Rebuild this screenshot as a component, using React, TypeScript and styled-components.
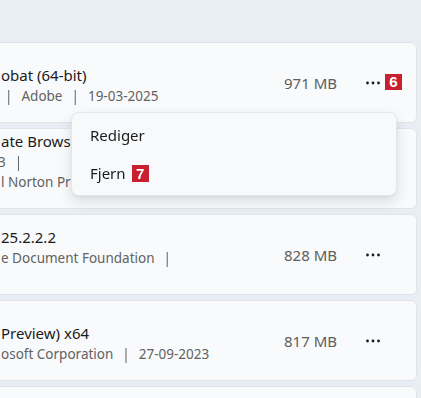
import React from 'react';
import styled, { createGlobalStyle } from 'styled-components';

interface AppRow {
  id: string;
  title: string;
  lines: React.ReactNode[];
  size: string;
  badge?: string;
}

const GlobalStyle = createGlobalStyle`
  html, body {
    margin: 0;
    padding: 0;
    background: #e9eef5;
  }
  body {
    font-family: "Noto Sans", "Open Sans", sans-serif;
    -webkit-font-smoothing: antialiased;
  }
`;

const Page = styled.div`
  position: relative;
  width: 421px;
  height: 398px;
  overflow: hidden;
  padding-top: 42px;
  box-sizing: border-box;
`;

const List = styled.div`
  display: flex;
  flex-direction: column;
  gap: 5px;
  margin-left: -24px;
  margin-right: 4px;
`;

const Card = styled.div`
  display: flex;
  align-items: center;
  height: 81px;
  box-sizing: border-box;
  padding: 0 27px 0 24px;
  background: #f9fafb;
  border: 1px solid #e1e5ea;
  border-radius: 6px;
`;

const Info = styled.div`
  flex: 1;
  min-width: 0;
  display: flex;
  flex-direction: column;
  padding-top: 4px;
  white-space: nowrap;
`;

const Title = styled.div`
  font-size: 15px;
  line-height: 22px;
  color: #1b1b1b;
`;

const Meta = styled.div`
  font-size: 13.5px;
  line-height: 20px;
  color: #626262;
`;

const Separator = styled.span<{ $lead?: boolean }>`
  display: inline-block;
  margin: 0 9px 0 ${(p) => (p.$lead ? '4px' : '9px')};
  color: #666666;
  transform: translateZ(0);
`;

const Clipped = styled.span`
  margin-left: -3px;
`;

const Size = styled.div`
  font-size: 15px;
  color: #5e5e5e;
  white-space: nowrap;
`;

const MoreButton = styled.div`
  position: relative;
  display: flex;
  align-items: center;
  justify-content: center;
  width: 32px;
  height: 32px;
  margin-left: 20px;
  flex-shrink: 0;
`;

const CornerBadge = styled.span`
  position: absolute;
  left: 28px;
  top: 7px;
  display: flex;
  align-items: center;
  justify-content: center;
  width: 17px;
  height: 16px;
  background: #c8202e;
  color: #ffffff;
  font-family: "Liberation Sans", Arial, sans-serif;
  font-weight: 700;
  font-size: 15px;
`;

const Menu = styled.div`
  position: absolute;
  left: 71px;
  top: 112px;
  width: 326px;
  box-sizing: border-box;
  padding: 3px 0;
  background: #f7f9fb;
  border: 1px solid rgba(0, 0, 0, 0.07);
  border-radius: 8px;
  box-shadow: 0 6px 14px rgba(0, 0, 0, 0.12), 0 1px 3px rgba(0, 0, 0, 0.06);
`;

const MenuItem = styled.div`
  display: flex;
  align-items: center;
  height: 38px;
  padding-left: 18px;
  font-size: 15px;
  color: #1b1b1b;
`;

const InlineBadge = styled.span`
  display: inline-flex;
  align-items: center;
  justify-content: center;
  width: 17px;
  height: 17px;
  margin-left: 6px;
  background: #c8202e;
  color: #ffffff;
  font-family: "Liberation Sans", Arial, sans-serif;
  font-weight: 700;
  font-size: 15px;
`;

const Sep: React.FC<{ lead?: boolean }> = ({ lead }) => <Separator $lead={lead}>|</Separator>;

const getRows = (): AppRow[] => [
  {
    id: 'acrobat',
    title: 'obat (64-bit)',
    lines: [
      <>
        <Sep lead />
        Adobe
        <Sep />
        19-03-2025
      </>,
    ],
    size: '971 MB',
    badge: '6',
  },
  {
    // covered by the open menu from x=71 on
    id: 'norton',
    title: 'ate Brows',
    lines: [
      <>
        <Clipped>3</Clipped>
        <Sep />
      </>,
      <>l Norton Pri</>,
      <>&nbsp;</>,
    ],
    size: '',
  },
  {
    id: 'libre',
    title: '25.2.2.2',
    lines: [
      <>
        e Document Foundation
        <Sep />
      </>,
      <>&nbsp;</>,
    ],
    size: '828 MB',
  },
  {
    id: 'teams',
    title: 'Preview) x64',
    lines: [
      <>
        osoft Corporation
        <Sep />
        27-09-2023
      </>,
    ],
    size: '817 MB',
  },
  {
    id: 'next',
    title: '',
    lines: [],
    size: '',
  },
];

const DotsIcon: React.FC = () => (
  <svg width="16" height="4" viewBox="0 0 16 4" aria-hidden="true">
    <circle cx="2.5" cy="2" r="1.4" fill="#1b1b1b" />
    <circle cx="8" cy="2" r="1.4" fill="#1b1b1b" />
    <circle cx="13.5" cy="2" r="1.4" fill="#1b1b1b" />
  </svg>
);

const App: React.FC = () => {
  const rows = getRows();

  return (
    <>
      <GlobalStyle />
      <Page>
        <List>
          {rows.map((row) => (
            <Card key={row.id}>
              <Info>
                <Title>{row.title}</Title>
                {row.lines.map((line, i) => (
                  <Meta key={i}>{line}</Meta>
                ))}
              </Info>
              <Size>{row.size}</Size>
              <MoreButton aria-label="Flere indstillinger">
                {row.size && <DotsIcon />}
                {row.badge && <CornerBadge>{row.badge}</CornerBadge>}
              </MoreButton>
            </Card>
          ))}
        </List>

        <Menu>
          <MenuItem>Rediger</MenuItem>
          <MenuItem>
            Fjern
            <InlineBadge>7</InlineBadge>
          </MenuItem>
        </Menu>
      </Page>
    </>
  );
};

export default App;
